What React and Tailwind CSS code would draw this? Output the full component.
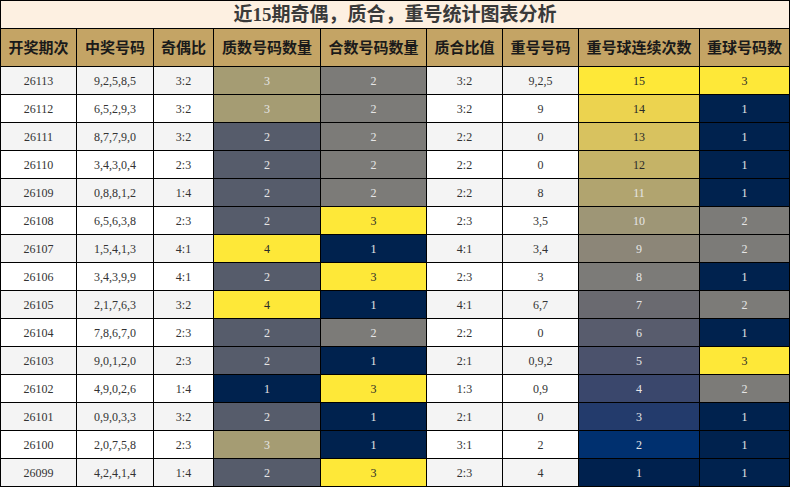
import React from "react";

const rows = [
  ["26113", "9,2,5,8,5", "3:2", 3, 2, "3:2", "9,2,5", 15, 3],
  ["26112", "6,5,2,9,3", "3:2", 3, 2, "3:2", "9", 14, 1],
  ["26111", "8,7,7,9,0", "3:2", 2, 2, "2:2", "0", 13, 1],
  ["26110", "3,4,3,0,4", "2:3", 2, 2, "2:2", "0", 12, 1],
  ["26109", "0,8,8,1,2", "1:4", 2, 2, "2:2", "8", 11, 1],
  ["26108", "6,5,6,3,8", "2:3", 2, 3, "2:3", "3,5", 10, 2],
  ["26107", "1,5,4,1,3", "4:1", 4, 1, "4:1", "3,4", 9, 2],
  ["26106", "3,4,3,9,9", "4:1", 2, 3, "2:3", "3", 8, 1],
  ["26105", "2,1,7,6,3", "3:2", 4, 1, "4:1", "6,7", 7, 2],
  ["26104", "7,8,6,7,0", "2:3", 2, 2, "2:2", "0", 6, 1],
  ["26103", "9,0,1,2,0", "2:3", 2, 1, "2:1", "0,9,2", 5, 3],
  ["26102", "4,9,0,2,6", "1:4", 1, 3, "1:3", "0,9", 4, 2],
  ["26101", "0,9,0,3,3", "3:2", 2, 1, "2:1", "0", 3, 1],
  ["26100", "2,0,7,5,8", "2:3", 3, 1, "3:1", "2", 2, 1],
  ["26099", "4,2,4,1,4", "1:4", 2, 3, "2:3", "4", 1, 1],
];

const headers = [
  "开奖期次",
  "中奖号码",
  "奇偶比",
  "质数号码数量",
  "合数号码数量",
  "质合比值",
  "重号号码",
  "重号球连续次数",
  "重球号码数",
];

// cividis-like ramp, 15 steps
const ramp15 = [
  "#00214e", "#00306f", "#233b6c", "#3a476c", "#4b526c",
  "#585c6d", "#6a6a70", "#7c7b78", "#8c8678", "#9e9676",
  "#b1a46f", "#c5b367", "#d8c25f", "#ecd34f", "#fee838",
];
const ramp4 = ["#00224e", "#565c6b", "#a59c73", "#fee838"];
const ramp3 = ["#00224e", "#7c7b78", "#fee838"];
const darkBg = ["#fee838", "#ecd34f", "#d8c25f", "#c5b367"];

const Heat = ({ value, color }) => (
  <div
    className="flex items-center justify-center text-[12px]"
    style={{ backgroundColor: color, color: darkBg.includes(color) ? "#2a2a2a" : "#e6e6e6" }}
  >
    {value}
  </div>
);

const App = () => {
  return (
    <div
      className="w-[790px] h-[487px] bg-black p-px grid gap-px grid-cols-[75px_76px_59px_106px_105px_75px_75px_120px_89px] grid-rows-[27px_37px_repeat(15,27px)]"
      style={{ fontFamily: '"Liberation Serif", "Noto Sans CJK SC", serif' }}
    >
      {/* Title */}
      <div className="col-span-9 bg-[#fdf0e1] flex items-center justify-center text-[19px] font-bold text-[#3a3a3a] leading-none">
        近15期奇偶，质合，重号统计图表分析
      </div>

      {/* Header */}
      {headers.map((h) => (
        <div
          key={h}
          className="bg-[#c4a465] flex items-center justify-center text-[15px] font-bold text-[#1a1a1a]"
          style={{ fontFamily: '"Noto Sans CJK SC", sans-serif' }}
        >
          {h}
        </div>
      ))}

      {/* Rows */}
      {rows.map((r, i) => {
        const bg = i % 2 === 0 ? "bg-[#f4f4f4]" : "bg-white";
        const plain = `${bg} flex items-center justify-center text-[12px] text-[#333]`;
        return (
          <React.Fragment key={r[0]}>
            <div className={plain}>{r[0]}</div>
            <div className={plain}>{r[1]}</div>
            <div className={plain}>{r[2]}</div>
            <Heat value={r[3]} color={ramp4[r[3] - 1]} />
            <Heat value={r[4]} color={ramp3[r[4] - 1]} />
            <div className={plain}>{r[5]}</div>
            <div className={plain}>{r[6]}</div>
            <Heat value={r[7]} color={ramp15[r[7] - 1]} />
            <Heat value={r[8]} color={ramp3[r[8] - 1]} />
          </React.Fragment>
        );
      })}
    </div>
  );
};

export default App;
